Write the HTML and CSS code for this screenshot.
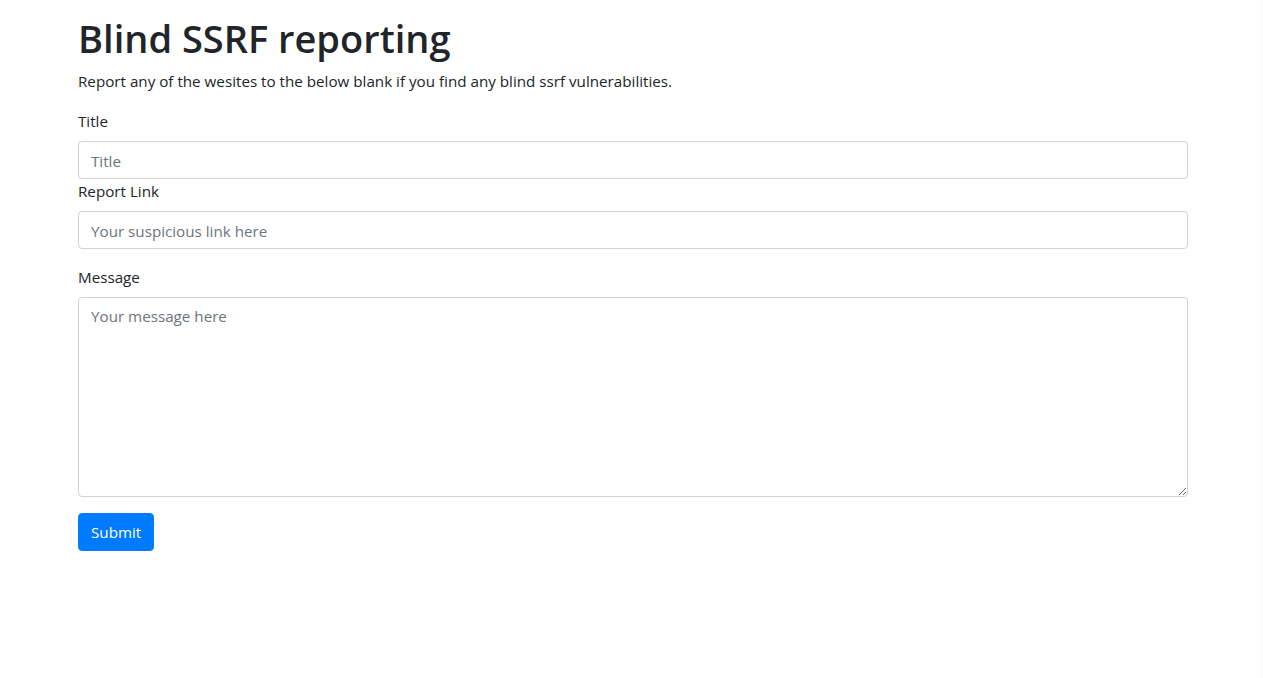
FILE: index.html
```html
<!DOCTYPE html>
<html lang="en">
<head>
<meta charset="utf-8">
<title>Blind SSRF reporting</title>
<link rel="stylesheet" href="styles.css">
</head>
<body>
<div class="container">
  <h1 class="title">Blind SSRF reporting</h1>
  <p class="lead-text">Report any of the wesites to the below blank if you find any blind ssrf vulnerabilities.</p>
  <form class="report-form">
    <div class="field">
      <label class="field-label" for="title">Title</label>
      <input class="control" type="text" id="title" placeholder="Title">
    </div>
    <div class="field field-group">
      <label class="field-label" for="link">Report Link</label>
      <input class="control" type="text" id="link" placeholder="Your suspicious link here">
    </div>
    <div class="field field-group">
      <label class="field-label" for="message">Message</label>
      <textarea class="control control-area" id="message" placeholder="Your message here"></textarea>
    </div>
    <button class="btn-submit" type="button">Submit</button>
  </form>
</div>
<div class="edge"></div>
</body>
</html>
```
FILE: styles.css
```css
html, body {
  margin: 0;
  padding: 0;
  background: #fff;
}
body {
  font-family: "Open Sans", "Noto Sans", sans-serif;
  font-size: 16px;
  line-height: 1.5;
  color: #212529;
}
.container {
  width: 1110px;
  padding: 14px 15px 0;
  margin-left: 63px;
}
.title {
  margin: 0 0 7px;
  font-size: 38px;
  font-weight: 600;
  line-height: 48px;
}
.lead-text {
  margin: 0 0 16px;
  font-size: 15.2px;
  line-height: 24px;
}
.field-label {
  display: block;
  margin-bottom: 8px;
  font-size: 15.2px;
  line-height: 24px;
}
.field-group {
  margin-bottom: 16px;
}
.control {
  display: block;
  box-sizing: border-box;
  width: 100%;
  height: 38px;
  padding: 7px 12px 5px;
  font-family: inherit;
  font-size: 15.2px;
  line-height: 24px;
  color: #495057;
  background: #fff;
  border: 1px solid #ced4da;
  border-radius: 4px;
  margin: 0;
}
.control::placeholder {
  color: #6c757d;
}
.control-area {
  height: 200px;
  padding-top: 6px;
  resize: vertical;
}
.btn-submit {
  display: block;
  box-sizing: border-box;
  height: 38px;
  padding: 6px 12px;
  font-family: inherit;
  font-size: 15.2px;
  line-height: 24px;
  color: #fff;
  background: #007bff;
  border: 1px solid #007bff;
  border-radius: 4px;
}
.edge {
  position: fixed;
  top: 0;
  right: 0;
  width: 2px;
  height: 100%;
  background: #fafafa;
}
```
